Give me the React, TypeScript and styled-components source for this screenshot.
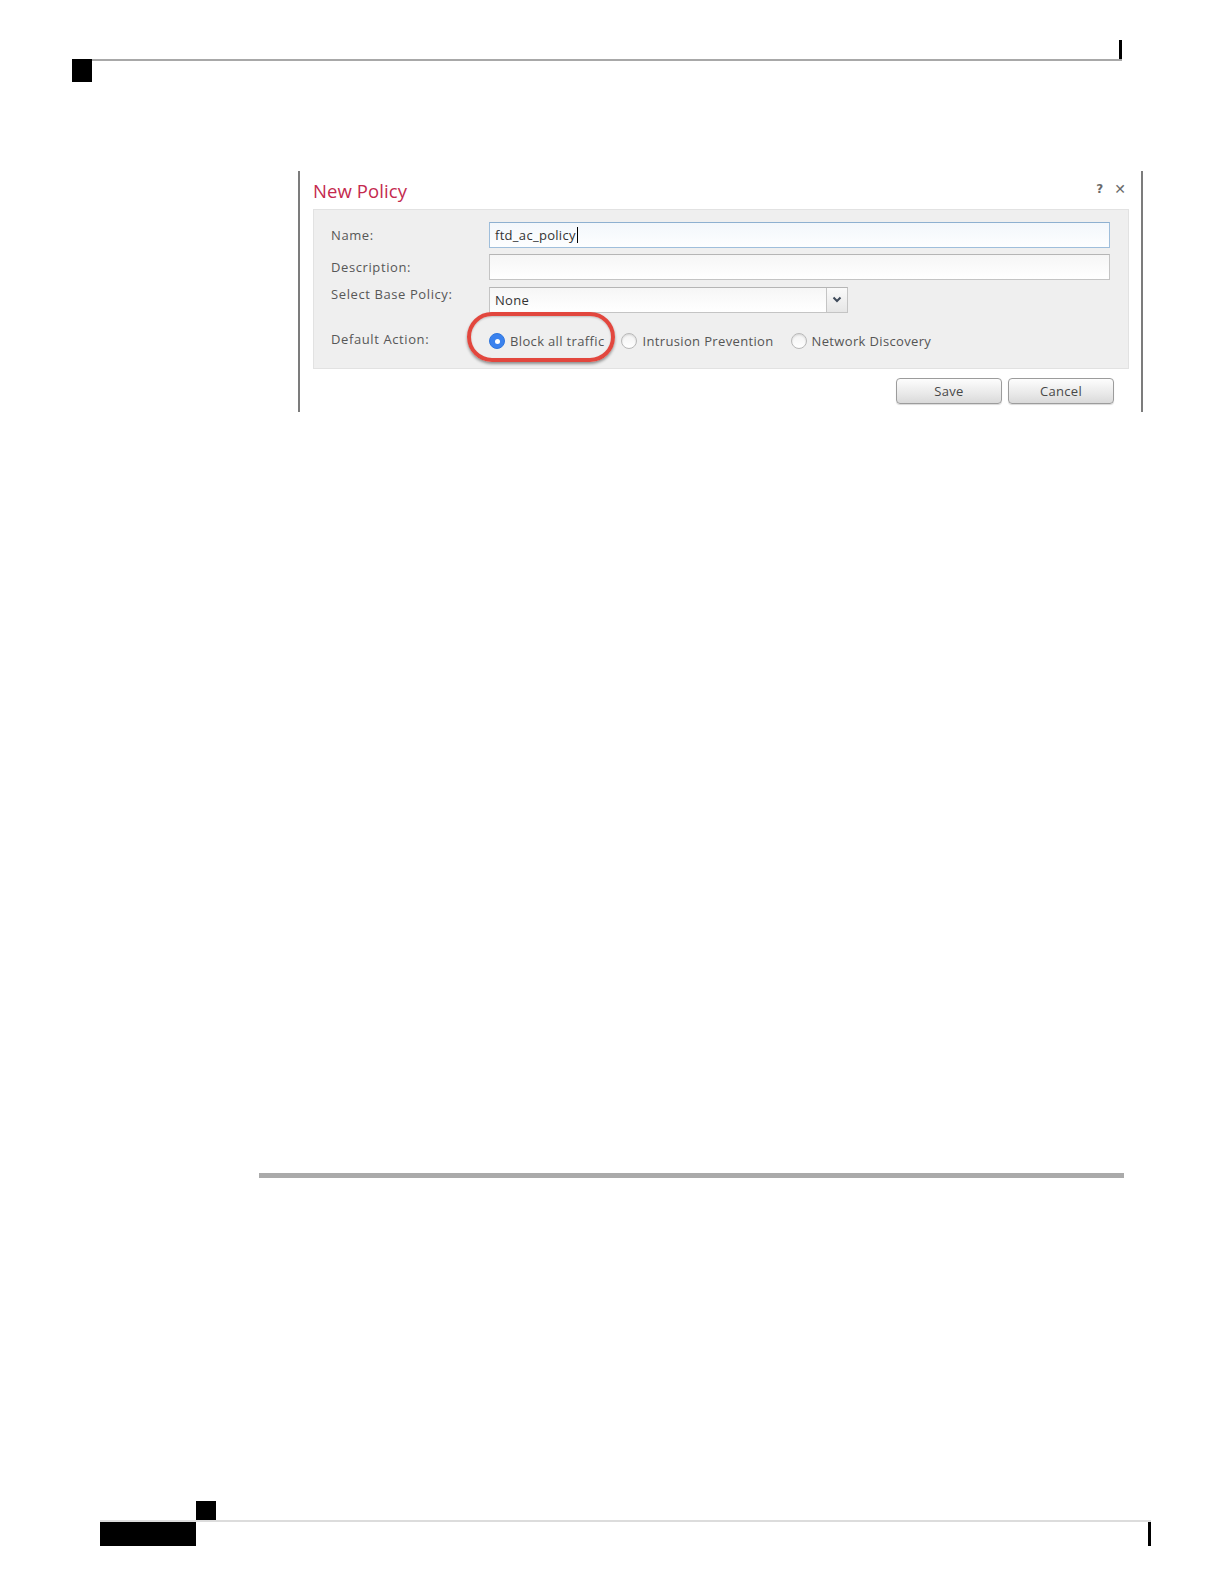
import React from 'react';
import styled, { createGlobalStyle } from 'styled-components';

const GlobalStyle = createGlobalStyle`
  html, body {
    margin: 0;
    padding: 0;
    background: #ffffff;
  }
  body {
    font-family: 'Open Sans', 'Liberation Sans', sans-serif;
  }
`;

const Page = styled.div`
  display: flex;
  flex-direction: column;
  width: 1224px;
  min-height: 1584px;
  background: #ffffff;
`;

/* page header of the manual */
const Header = styled.header`
  display: flex;
  flex-direction: column;
  margin: 0 102px 0 72px;
  padding-top: 40px;
`;
const HeaderMark = styled.div`
  align-self: flex-end;
  width: 3px;
  height: 19px;
  background: #000;
`;
const HeaderRow = styled.div`
  display: flex;
  align-items: flex-start;
`;
const BlackBlock = styled.div<{ w: number; h: number }>`
  flex: none;
  width: ${(p) => p.w}px;
  height: ${(p) => p.h}px;
  background: #000;
`;
const HeaderRule = styled.div`
  flex: 1;
  height: 2px;
  background: #a8a8a8;
`;

/* dialog screenshot */
const Dialog = styled.section`
  box-sizing: border-box;
  display: flex;
  flex-direction: column;
  width: 845px;
  height: 241px;
  margin: 89px 0 0 298px;
  padding: 0 0 0 13px;
  border-left: 2px solid #7c7c7c;
  border-right: 2px solid #7c7c7c;
  background: #fff;
`;
const TitleBar = styled.div`
  display: flex;
  align-items: flex-start;
  justify-content: space-between;
  height: 38px;
  padding-right: 15px;
`;
const Title = styled.h2`
  margin: 8px 0 0 0;
  font-family: 'Open Sans', sans-serif;
  font-size: 18.5px;
  font-weight: 400;
  line-height: 24px;
  letter-spacing: 0.1px;
  color: #c42a4e;
`;
const TitleTools = styled.div`
  display: flex;
  align-items: center;
  gap: 11px;
  margin-top: 10px;
  font-family: 'DejaVu Sans', sans-serif;
  font-weight: 700;
  line-height: 16px;
  color: #6a6a6a;
`;
const Help = styled.span`
  font-size: 12px;
`;
const Close = styled.span`
  font-size: 14px;
`;
const Panel = styled.div`
  box-sizing: border-box;
  display: flex;
  flex-direction: column;
  gap: 6px;
  height: 160px;
  margin-right: 12px;
  padding: 12px 18px 0 17px;
  background: #efefef;
  border: 1px solid #e2e2e2;
`;
const Row = styled.div<{ h?: number }>`
  display: grid;
  grid-template-columns: 158px 1fr;
  align-items: center;
  height: ${(p) => p.h ?? 26}px;
`;
const Label = styled.span<{ lift?: number }>`
  position: relative;
  top: ${(p) => -(p.lift ?? 0)}px;
  font-size: 13px;
  letter-spacing: 0.6px;
  color: #575757;
`;
const Field = styled.div<{ focused?: boolean }>`
  box-sizing: border-box;
  display: flex;
  align-items: center;
  height: 26px;
  padding-left: 5px;
  border: 1px solid ${(p) => (p.focused ? '#9fbedb' : '#c4c4c4')};
  border-top-color: ${(p) => (p.focused ? '#8eb0d0' : '#b5b5b5')};
  background: ${(p) =>
    p.focused ? 'linear-gradient(#f3f7fb, #fdfeff)' : 'linear-gradient(#f6f6f6, #ffffff)'};
  font-size: 13px;
  letter-spacing: 0.3px;
  color: #333;
`;
const Caret = styled.span`
  display: inline-block;
  width: 1px;
  height: 16px;
  margin-left: 1px;
  background: #000;
`;
const Select = styled(Field)`
  width: 359px;
  padding-right: 0;
  justify-content: space-between;
`;
const SelectButton = styled.div`
  box-sizing: border-box;
  display: flex;
  align-items: center;
  justify-content: center;
  width: 21px;
  height: 100%;
  border-left: 1px solid #c4c4c4;
  background: linear-gradient(#fafafa, #e6e6e6);
`;
const Options = styled.div`
  display: flex;
  align-items: center;
  gap: 17px;
`;
const Option = styled.label`
  position: relative;
  display: flex;
  align-items: center;
  gap: 5px;
  height: 20px;
  font-size: 13px;
  letter-spacing: 0.35px;
  color: #555;
`;
const Radio = styled.span<{ checked?: boolean }>`
  box-sizing: border-box;
  display: flex;
  align-items: center;
  justify-content: center;
  width: 16px;
  height: 16px;
  border-radius: 50%;
  border: 1px solid ${(p) => (p.checked ? '#2f76de' : '#b8b8b8')};
  background: ${(p) => (p.checked ? '#3b82ee' : 'linear-gradient(#f2f2f2, #ffffff)')};
  box-shadow: ${(p) => (p.checked ? 'none' : 'inset 0 1px 2px rgba(0,0,0,0.12)')};
  &::after {
    content: '';
    display: ${(p) => (p.checked ? 'block' : 'none')};
    width: 5px;
    height: 5px;
    border-radius: 50%;
    background: #fff;
  }
`;
/* red annotation around the selected option */
const Highlight = styled.span`
  position: absolute;
  top: -19px;
  bottom: -11px;
  left: -22px;
  right: -11px;
  border: 4px solid #e2473e;
  border-radius: 26px;
  box-shadow: 0 2px 3px rgba(0, 0, 0, 0.4), inset 0 1px 2px rgba(0, 0, 0, 0.2);
  pointer-events: none;
`;
const ButtonBar = styled.div`
  display: flex;
  justify-content: flex-end;
  gap: 6px;
  margin-top: 9px;
  padding-right: 27px;
`;
const Button = styled.button`
  box-sizing: border-box;
  width: 106px;
  height: 26px;
  padding: 0;
  border: 1px solid #9c9c9c;
  border-radius: 4px;
  background: linear-gradient(#fdfdfd, #e9e9e9 60%, #dadada);
  box-shadow: 0 1px 1px rgba(0, 0, 0, 0.15);
  font-family: 'Open Sans', sans-serif;
  font-size: 13px;
  letter-spacing: 0.3px;
  color: #484848;
`;

const MidRule = styled.hr`
  width: 865px;
  height: 5px;
  margin: 761px 0 0 259px;
  border: 0;
  background: #aaaaaa;
`;

/* page footer */
const Footer = styled.footer`
  display: flex;
  flex-direction: column;
  margin: 323px 73px 0 100px;
`;
const FooterTop = styled.div`
  display: flex;
  padding-left: 96px;
`;
const FooterRule = styled.div`
  height: 2px;
  background: #dcdcdc;
`;
const FooterBottom = styled.div`
  display: flex;
  justify-content: space-between;
`;

const Chevron = () => (
  <svg width="10" height="7" viewBox="0 0 10 7">
    <path d="M1.5 1.5 L5 5 L8.5 1.5" fill="none" stroke="#3e4a5a" strokeWidth="2" />
  </svg>
);

const App: React.FC = () => {
  return (
    <Page>
      <GlobalStyle />
      <Header>
        <HeaderMark />
        <HeaderRow>
          <BlackBlock w={20} h={23} />
          <HeaderRule />
        </HeaderRow>
      </Header>

      <Dialog>
        <TitleBar>
          <Title>New Policy</Title>
          <TitleTools>
            <Help>?</Help>
            <Close>✕</Close>
          </TitleTools>
        </TitleBar>
        <Panel>
          <Row>
            <Label>Name:</Label>
            <Field focused>
              ftd_ac_policy
              <Caret />
            </Field>
          </Row>
          <Row>
            <Label>Description:</Label>
            <Field />
          </Row>
          <Row h={27}>
            <Label lift={6}>Select Base Policy:</Label>
            <Select>
              None
              <SelectButton>
                <Chevron />
              </SelectButton>
            </Select>
          </Row>
          <Row h={44}>
            <Label lift={2}>Default Action:</Label>
            <Options>
              <Option>
                <Radio checked />
                Block all traffic
                <Highlight />
              </Option>
              <Option>
                <Radio />
                Intrusion Prevention
              </Option>
              <Option>
                <Radio />
                Network Discovery
              </Option>
            </Options>
          </Row>
        </Panel>
        <ButtonBar>
          <Button>Save</Button>
          <Button>Cancel</Button>
        </ButtonBar>
      </Dialog>

      <MidRule />

      <Footer>
        <FooterTop>
          <BlackBlock w={20} h={19} />
        </FooterTop>
        <FooterRule />
        <FooterBottom>
          <BlackBlock w={96} h={24} />
          <BlackBlock w={3} h={24} />
        </FooterBottom>
      </Footer>
    </Page>
  );
};

export default App;
